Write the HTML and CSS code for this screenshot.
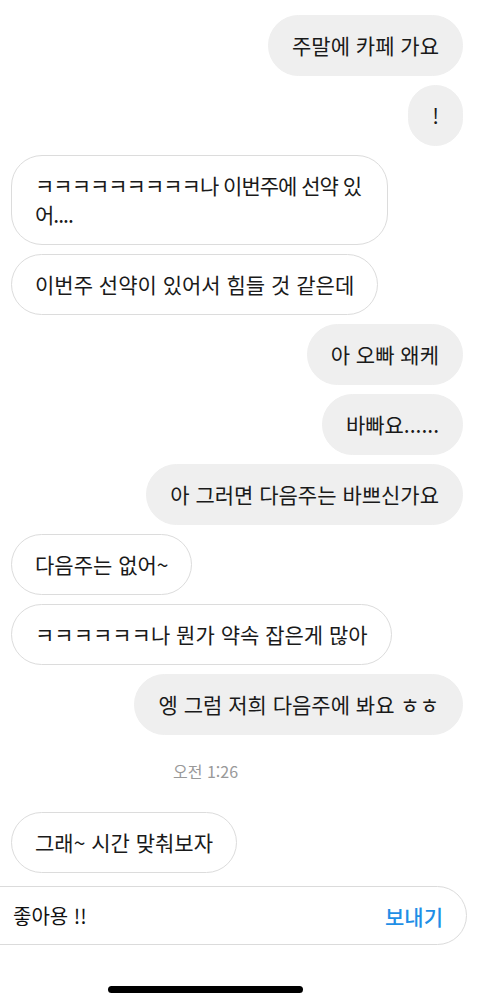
FILE: index.html
```html
<!DOCTYPE html>
<html lang="ko">
<head>
<meta charset="utf-8">
<link rel="stylesheet" href="styles.css">
</head>
<body>
<div class="screen">
  <div class="thread">
    <div class="bubble sent">주말에 카페 가요</div>
    <div class="bubble sent">!</div>
    <div class="bubble recv wide">ㅋㅋㅋㅋㅋㅋㅋㅋㅋ나 이번주에 선약 있어....</div>
    <div class="bubble recv">이번주 선약이 있어서 힘들 것 같은데</div>
    <div class="bubble sent">아 오빠 왜케</div>
    <div class="bubble sent">바빠요......</div>
    <div class="bubble sent">아 그러면 다음주는 바쁘신가요</div>
    <div class="bubble recv">다음주는 없어~</div>
    <div class="bubble recv">ㅋㅋㅋㅋㅋㅋ나 뭔가 약속 잡은게 많아</div>
    <div class="bubble sent">엥 그럼 저희 다음주에 봐요 ㅎㅎ</div>
    <div class="stamp">오전 1:26</div>
    <div class="bubble recv">그래~ 시간 맞춰보자</div>
  </div>
  <div class="composer">
    <span class="draft">좋아용 !!</span>
    <span class="send">보내기</span>
  </div>
  <div class="home-row"><div class="home-bar"></div></div>
</div>
</body>
</html>
```

FILE: styles.css
```css
* { box-sizing: border-box; }
html, body {
  margin: 0;
  padding: 0;
  background: #ffffff;
}
body {
  font-family: "Noto Sans CJK KR", "Noto Sans", sans-serif;
  color: #1a1a1a;
  width: 480px;
  height: 1005px;
  overflow: hidden;
}
.screen {
  display: flex;
  flex-direction: column;
  height: 1005px;
}
.thread {
  display: flex;
  flex-direction: column;
  padding: 15px 17px 0 11px;
  gap: 9px;
}
.bubble {
  font-size: 21px;
  line-height: 29px;
  padding: 15px 23px;
  border-radius: 31px;
  max-width: 440px;
  word-break: keep-all;
  white-space: nowrap;
}
.bubble.sent {
  align-self: flex-end;
  background: #efefef;
  border: 1px solid #efefef;
}
.bubble.recv {
  align-self: flex-start;
  background: #ffffff;
  border: 1px solid #dcdcdc;
}
.bubble.wide {
  white-space: normal;
  word-break: break-all;
  letter-spacing: -1px;
  max-width: 377px;
}
.stamp {
  font-size: 16px;
  line-height: 20px;
  color: #999999;
  padding-left: 162px;
  margin: 17px 0 22px;
}
.composer {
  margin: 13px 13px 0 -40px;
  height: 59px;
  border: 1px solid #dbdbdb;
  border-radius: 30px;
  display: flex;
  align-items: center;
  justify-content: space-between;
  padding: 0 23px 0 52px;
}
.draft {
  font-size: 20px;
  color: #111111;
}
.send {
  font-size: 21px;
  font-weight: 500;
  color: #1f8fe6;
}
.home-row {
  flex: 1;
  display: flex;
  align-items: flex-end;
  padding: 0 0 12px 108px;
}
.home-bar {
  width: 195px;
  height: 7px;
  border-radius: 4px;
  background: #000000;
}
```
